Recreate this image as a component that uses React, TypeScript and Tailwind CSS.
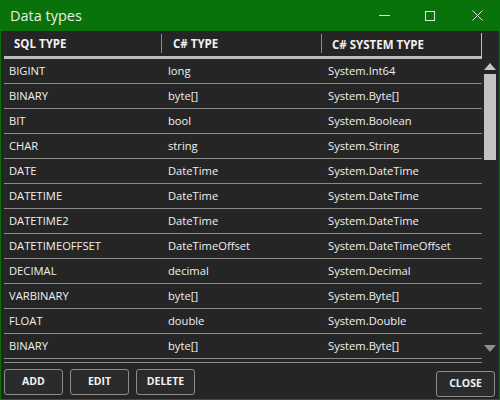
import React from "react";

const rows = [
	["BIGINT", "long", "System.Int64"],
	["BINARY", "byte[]", "System.Byte[]"],
	["BIT", "bool", "System.Boolean"],
	["CHAR", "string", "System.String"],
	["DATE", "DateTime", "System.DateTime"],
	["DATETIME", "DateTime", "System.DateTime"],
	["DATETIME2", "DateTime", "System.DateTime"],
	["DATETIMEOFFSET", "DateTimeOffset", "System.DateTimeOffset"],
	["DECIMAL", "decimal", "System.Decimal"],
	["VARBINARY", "byte[]", "System.Byte[]"],
	["FLOAT", "double", "System.Double"],
	["BINARY", "byte[]", "System.Byte[]"],
];

const Button = ({ label }: { label: string }) => (
	<button className="w-[59px] h-[26px] rounded-[3px] border border-[#8c8c8c] bg-[#2b2b2b] text-[10.5px] font-bold text-[#f2f2f2]">
		{label}
	</button>
);

export default function App() {
	return (
		<div
			className="w-[500px] h-[400px] bg-[#0a720a] flex flex-col px-[1px] pb-[1px] text-[#f0f0f0]"
			style={{ fontFamily: '"Open Sans", "Noto Sans", sans-serif' }}
		>
			<div className="h-[31px] flex items-center">
				<span className="pl-[9px] text-[14.5px] text-[#e8f0e8]">Data types</span>
				<div className="ml-auto flex items-center h-full">
					<div className="w-[46px] h-full flex items-center justify-center">
						<div className="w-[11px] h-[1px] bg-[#e0e8e0]" />
					</div>
					<div className="w-[46px] h-full flex items-center justify-center">
						<div className="w-[10px] h-[10px] border border-[#e0e8e0]" />
					</div>
					<div className="w-[46px] h-full flex items-center justify-center pl-[3px]">
						<svg width="11" height="11" viewBox="0 0 11 11">
							<path d="M0.5 0.5 L10.5 10.5 M10.5 0.5 L0.5 10.5" stroke="#e0e8e0" strokeWidth="1" />
						</svg>
					</div>
				</div>
			</div>
			<div className="flex-1 bg-[#252525] flex flex-col">
				<div className="flex pl-[3px]">
					<div className="w-[478px]">
						<div className="flex h-[28px] border-b-[3px] border-[#bdbdbd] text-[11.5px] font-bold">
							<div className="w-[158px] flex items-center pl-[10px] border-r border-[#8a8a8a] my-[3px]">SQL TYPE</div>
							<div className="w-[160px] flex items-center pl-[11px] border-r border-[#8a8a8a] my-[3px]">C# TYPE</div>
							<div className="w-[160px] flex items-center pl-[10px] border-r border-[#bdbdbd] mt-[2px]">C# SYSTEM TYPE</div>
						</div>
						<div className="h-[304px] overflow-hidden border-b border-[#8a8a8a] text-[11.2px]">
							{rows.map((r, i) => (
								<div key={i} className="flex h-[25px] border-b border-[#8a8a8a] items-center">
									<div className="w-[158px] pl-[5px]">{r[0]}</div>
									<div className="w-[160px] pl-[6px]">{r[1]}</div>
									<div className="w-[160px] pl-[6px]">{r[2]}</div>
								</div>
							))}
						</div>
					</div>
					<div className="w-[16px] pt-[28px] h-[332px] flex flex-col items-center">
						<svg width="12" height="7" viewBox="0 0 12 7" className="mt-[4px]">
							<path d="M6 0 L12 7 L0 7 Z" fill="#c6c6c6" />
						</svg>
						<div className="w-[12px] h-[86px] bg-[#c4c4c4] mt-[4px]" />
						<svg width="12" height="7" viewBox="0 0 12 7" className="mt-auto mb-[11px]">
							<path d="M0 0 L12 0 L6 7 Z" fill="#8e8e8e" />
						</svg>
					</div>
				</div>
				<div className="flex gap-[7px] pl-[3px] pr-[4px] pt-[6px]">
					<Button label="ADD" />
					<Button label="EDIT" />
					<Button label="DELETE" />
					<div className="ml-auto">
						<Button label="CLOSE" />
					</div>
				</div>
			</div>
		</div>
	);
}
